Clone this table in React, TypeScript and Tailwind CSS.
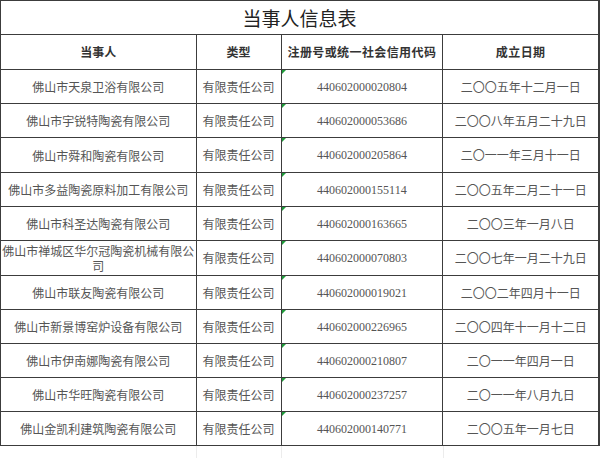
import React from "react";

type Party = { name: string; kind: string; code: string; founded: string };

const PARTIES: Party[] = [
  { name: "佛山市天泉卫浴有限公司", kind: "有限责任公司", code: "440602000020804", founded: "二〇〇五年十二月一日" },
  { name: "佛山市宇锐特陶瓷有限公司", kind: "有限责任公司", code: "440602000053686", founded: "二〇〇八年五月二十九日" },
  { name: "佛山市舜和陶瓷有限公司", kind: "有限责任公司", code: "440602000205864", founded: "二〇一一年三月十一日" },
  { name: "佛山市多益陶瓷原料加工有限公司", kind: "有限责任公司", code: "440602000155114", founded: "二〇〇五年二月二十一日" },
  { name: "佛山市科圣达陶瓷有限公司", kind: "有限责任公司", code: "440602000163665", founded: "二〇〇三年一月八日" },
  { name: "佛山市禅城区华尔冠陶瓷机械有限公司", kind: "有限责任公司", code: "440602000070803", founded: "二〇〇七年一月二十九日" },
  { name: "佛山市联友陶瓷有限公司", kind: "有限责任公司", code: "440602000019021", founded: "二〇〇二年四月十一日" },
  { name: "佛山市新景博窑炉设备有限公司", kind: "有限责任公司", code: "440602000226965", founded: "二〇〇四年十一月十二日" },
  { name: "佛山市伊南娜陶瓷有限公司", kind: "有限责任公司", code: "440602000210807", founded: "二〇一一年四月一日" },
  { name: "佛山市华旺陶瓷有限公司", kind: "有限责任公司", code: "440602000237257", founded: "二〇一一年八月九日" },
  { name: "佛山金凯利建筑陶瓷有限公司", kind: "有限责任公司", code: "440602000140771", founded: "二〇〇五年一月七日" },
];

// row heights (bottom border included) so the grid lines land where the sheet has them
const ROW_HEIGHTS = ["h-[34px]", "h-[34px]", "h-[35px]", "h-[34px]", "h-[34px]", "h-[35px]", "h-[34px]", "h-[34px]", "h-[34px]", "h-[34px]", "h-[34px]"];

const cjk = "font-['Noto_Sans_CJK_SC',sans-serif]";

function ErrorMark() {
  // Excel's little green "number stored as text" triangle
  return (
    <span className="absolute left-0 top-0 w-0 h-0 border-t-[4px] border-t-[#1e9b3a] border-r-[4px] border-r-transparent" />
  );
}

export default function App() {
  return (
    <div className={`w-[600px] h-[458px] bg-white overflow-hidden ${cjk}`}>
      <div className="border-t border-l border-r-2 border-[#3c3c3c]">
        <div className="h-[34px] border-b border-[#3c3c3c] flex items-center justify-center text-[19px] text-[#222] leading-none">
          当事人信息表
        </div>

        <div className="h-[35px] flex border-b border-[#3c3c3c] text-[12px] font-bold text-[#333]">
          <div className="w-[196px] border-r border-[#3c3c3c] flex items-center justify-center">当事人</div>
          <div className="w-[85px] border-r border-[#3c3c3c] flex items-center justify-center">类型</div>
          <div className="w-[162px] border-r border-[#3c3c3c] flex items-center justify-center tracking-[0.4px]">注册号或统一社会信用代码</div>
          <div className="w-[155px] flex items-center justify-center tracking-[0.4px]">成立日期</div>
        </div>

        {PARTIES.map((p, i) => (
          <div key={p.code} className={`${ROW_HEIGHTS[i]} flex border-b border-[#3c3c3c] text-[12px] text-[#555]`}>
            <div className="w-[196px] border-r border-[#3c3c3c] flex items-center justify-center text-center leading-[15px] px-[1px]">
              {p.name}
            </div>
            <div className="w-[85px] border-r border-[#3c3c3c] flex items-center justify-center">{p.kind}</div>
            <div className="relative w-[162px] border-r border-[#3c3c3c] flex items-center justify-center font-['Liberation_Serif',serif] text-[12px] text-[#555]">
              <ErrorMark />
              {p.code}
            </div>
            <div className="w-[155px] flex items-center justify-center">{p.founded}</div>
          </div>
        ))}
      </div>

      <div className="h-[20px] flex">
        <div className="w-[197px] border-r border-[#ececec]" />
        <div className="w-[85px] border-r border-[#ececec]" />
        <div className="w-[162px] border-r border-[#ececec]" />
        <div className="flex-1" />
      </div>
    </div>
  );
}
